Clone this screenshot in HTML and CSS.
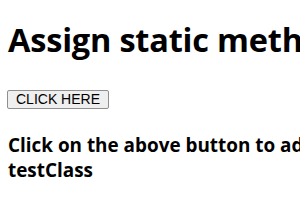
FILE: index.html
```html
<!DOCTYPE html>
<html>
<head>
<meta charset="utf-8">
<link rel="stylesheet" href="styles.css">
</head>
<body>
<h1 class="title">Assign static method to a class</h1>
<button class="btn">CLICK HERE</button>
<h3 class="result">Click on the above button to add static method to testClass</h3>
</body>
</html>
```

FILE: styles.css
```css
html {
  margin: 0;
  padding: 0;
  width: 300px;
  height: 210px;
  overflow: hidden;
  background: #ffffff;
}
body {
  margin: 0;
  width: 600px;
  height: 210px;
  padding: 0 8px;
  box-sizing: border-box;
  font-family: "Open Sans", sans-serif;
  color: #000;
  background: #ffffff;
}
.title {
  font-size: 32.5px;
  font-weight: 700;
  line-height: 36px;
  margin: 22px 0 0 0;
  white-space: nowrap;
  letter-spacing: -0.2px;
}
.btn {
  display: block;
  margin: 32px 0 0 -1px;
  padding: 1px 8px;
  font-family: "Liberation Sans", Arial, sans-serif;
  font-size: 14px;
  line-height: 15px;
  color: #000;
  background: #efefef;
  border: 1px solid #8f8f8f;
  border-radius: 2px;
}
.result {
  font-size: 18.9px;
  font-weight: 700;
  line-height: 25px;
  margin: 24px 0 0 0;
  width: 540px;
}
```
